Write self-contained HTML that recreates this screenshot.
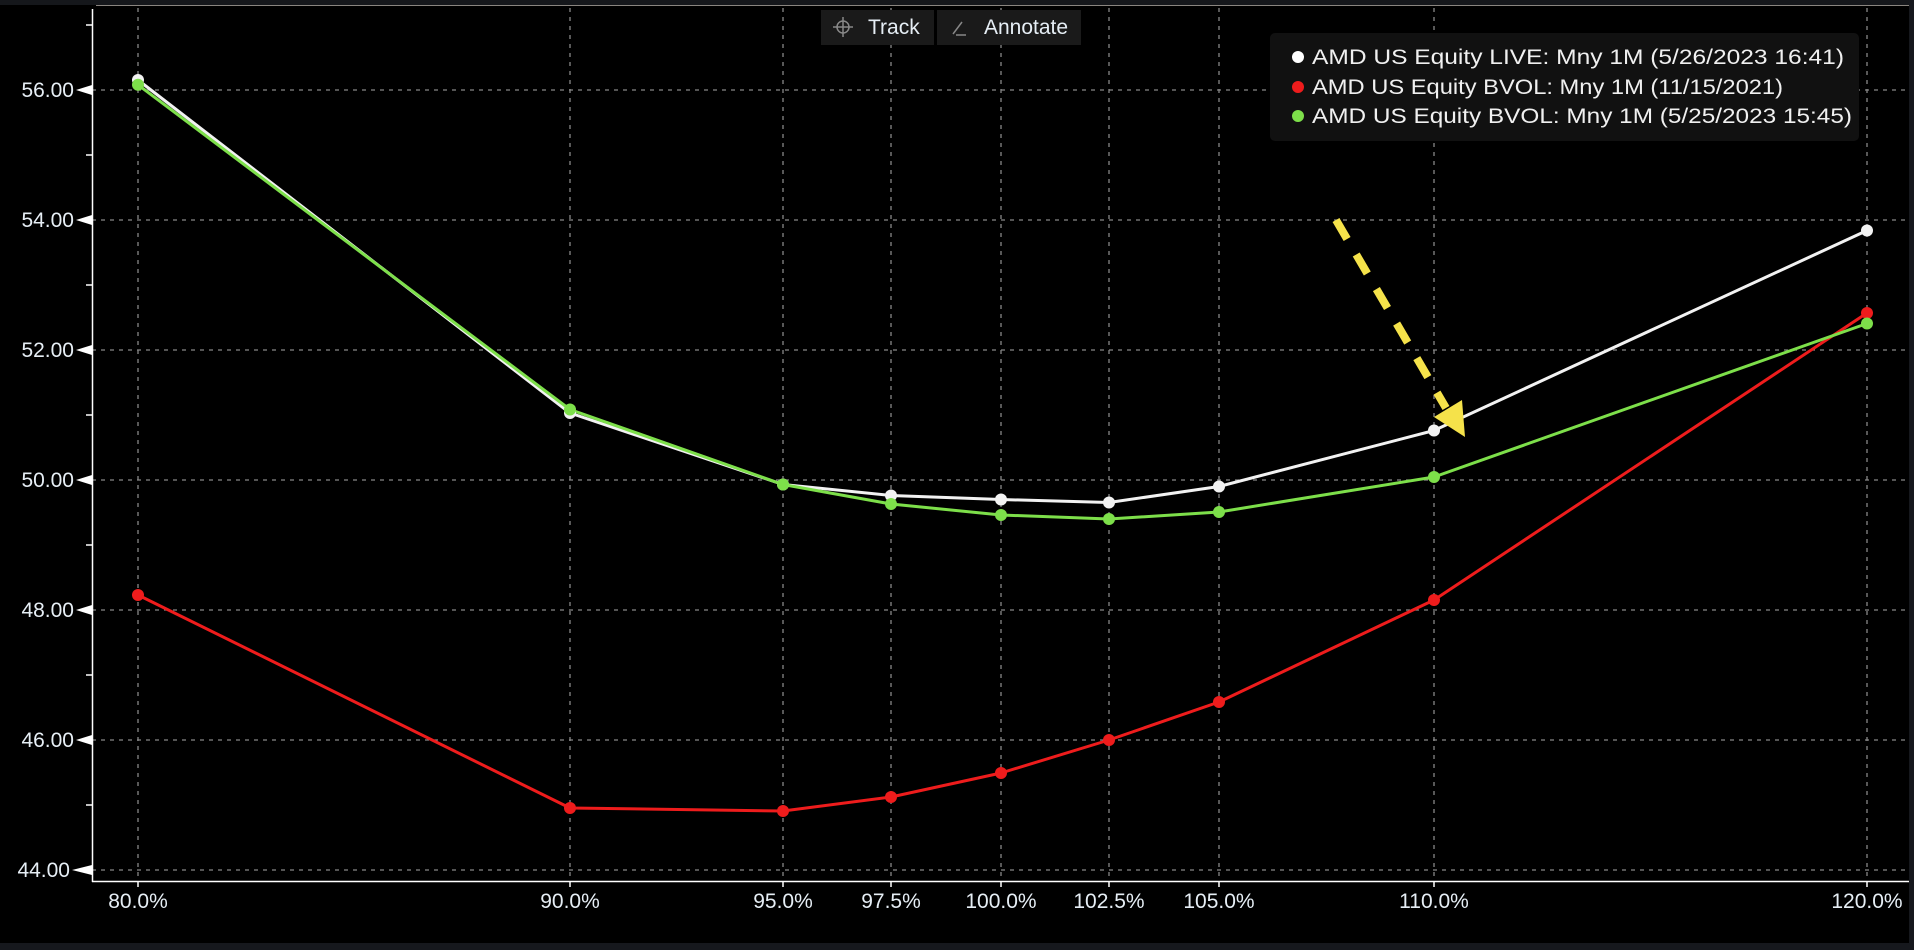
<!DOCTYPE html>
<html><head><meta charset="utf-8"><style>
html,body{margin:0;padding:0;background:#000;}
body{width:1914px;height:950px;overflow:hidden;position:relative;font-family:"Liberation Sans",sans-serif;}
</style></head><body>
<svg width="1914" height="950" viewBox="0 0 1914 950" xmlns="http://www.w3.org/2000/svg" style="position:absolute;left:0;top:0">
<rect width="1914" height="950" fill="#000"/>
<rect x="0" y="0" width="1914" height="5" fill="#15171b"/>
<line x1="96" y1="5.5" x2="1914" y2="5.5" stroke="#8a8580" stroke-width="1"/>
<rect x="0" y="943" width="1914" height="7" fill="#16181d"/>
<rect x="1909" y="0" width="5" height="950" fill="#16181d"/>
<!-- grid -->
<g stroke="#888" stroke-width="1.3" stroke-dasharray="4,5">
<line x1="92" y1="90" x2="1909" y2="90"/><line x1="92" y1="220" x2="1909" y2="220"/>
<line x1="92" y1="350" x2="1909" y2="350"/><line x1="92" y1="480" x2="1909" y2="480"/>
<line x1="92" y1="610" x2="1909" y2="610"/><line x1="92" y1="740" x2="1909" y2="740"/>
<line x1="92" y1="870" x2="1909" y2="870"/>
<line x1="138" y1="8" x2="138" y2="881"/><line x1="570" y1="8" x2="570" y2="881"/>
<line x1="783" y1="8" x2="783" y2="881"/><line x1="891" y1="8" x2="891" y2="881"/>
<line x1="1001" y1="8" x2="1001" y2="881"/><line x1="1109" y1="8" x2="1109" y2="881"/>
<line x1="1219" y1="8" x2="1219" y2="881"/><line x1="1434" y1="8" x2="1434" y2="881"/>
<line x1="1867" y1="8" x2="1867" y2="881"/>
</g>
<!-- axes -->
<g stroke="#fff" stroke-width="1.5">
<line x1="92.5" y1="9" x2="92.5" y2="882"/><line x1="92" y1="881.5" x2="1909" y2="881.5"/>
<line x1="86" y1="25" x2="92" y2="25"/><line x1="86" y1="155" x2="92" y2="155"/>
<line x1="86" y1="285" x2="92" y2="285"/><line x1="86" y1="415" x2="92" y2="415"/>
<line x1="86" y1="545" x2="92" y2="545"/><line x1="86" y1="675" x2="92" y2="675"/>
<line x1="86" y1="805" x2="92" y2="805"/>
<line x1="138" y1="881" x2="138" y2="887"/><line x1="570" y1="881" x2="570" y2="887"/>
<line x1="783" y1="881" x2="783" y2="887"/><line x1="891" y1="881" x2="891" y2="887"/>
<line x1="1001" y1="881" x2="1001" y2="887"/><line x1="1109" y1="881" x2="1109" y2="887"/>
<line x1="1219" y1="881" x2="1219" y2="887"/><line x1="1434" y1="881" x2="1434" y2="887"/>
<line x1="1867" y1="881" x2="1867" y2="887"/>
</g>
<g fill="#fff">
<polygon points="76,90 92,85 92,95"/><polygon points="76,220 92,215 92,225"/>
<polygon points="76,350 92,345 92,355"/><polygon points="76,480 92,475 92,485"/>
<polygon points="76,610 92,605 92,615"/><polygon points="76,740 92,735 92,745"/>
<polygon points="72,870 92,865 92,875"/>
</g>
<g fill="#e6eef5" font-size="21" font-family="Liberation Sans, sans-serif" text-anchor="end">
<text x="74" y="97">56.00</text><text x="74" y="227">54.00</text>
<text x="74" y="357">52.00</text><text x="74" y="487">50.00</text>
<text x="74" y="617">48.00</text><text x="74" y="747">46.00</text>
<text x="70" y="877">44.00</text>
</g>
<g fill="#e6eef5" font-size="21" font-family="Liberation Sans, sans-serif" text-anchor="middle">
<text x="138" y="908">80.0%</text><text x="570" y="908">90.0%</text>
<text x="783" y="908">95.0%</text><text x="891" y="908">97.5%</text>
<text x="1001" y="908">100.0%</text><text x="1109" y="908">102.5%</text>
<text x="1219" y="908">105.0%</text><text x="1434" y="908">110.0%</text>
<text x="1867" y="908">120.0%</text>
</g>
<!-- series -->
<g fill="none" stroke-width="3" stroke-linejoin="round">
<polyline stroke="#ee1c1c" points="138,595 570,808 783,811 891,797 1001,773 1109,740 1219,702 1434,600 1867,313"/>
<polyline stroke="#f2f2f2" points="138,80 570,413 783,484.5 891,495.5 1001,499.5 1109,502.5 1219,486.5 1434,430.5 1867,230.5"/>
<polyline stroke="#7ddf4a" points="138,84.8 570,409.5 783,484.5 891,504 1001,515 1109,519 1219,512 1434,477 1867,323.5"/>
</g>
<g fill="#ee1c1c">
<circle cx="138" cy="595" r="6"/><circle cx="570" cy="808" r="6"/><circle cx="783" cy="811" r="6"/><circle cx="891" cy="797" r="6"/><circle cx="1001" cy="773" r="6"/><circle cx="1109" cy="740" r="6"/><circle cx="1219" cy="702" r="6"/><circle cx="1434" cy="600" r="6"/><circle cx="1867" cy="313" r="6"/>
</g>
<g fill="#f2f2f2">
<circle cx="138" cy="80" r="6"/><circle cx="570" cy="413" r="6"/><circle cx="783" cy="484.5" r="6"/><circle cx="891" cy="495.5" r="6"/><circle cx="1001" cy="499.5" r="6"/><circle cx="1109" cy="502.5" r="6"/><circle cx="1219" cy="486.5" r="6"/><circle cx="1434" cy="430.5" r="6"/><circle cx="1867" cy="230.5" r="6"/>
</g>
<g fill="#7ddf4a">
<circle cx="138" cy="84.8" r="6"/><circle cx="570" cy="409.5" r="6"/><circle cx="783" cy="484.5" r="6"/><circle cx="891" cy="504" r="6"/><circle cx="1001" cy="515" r="6"/><circle cx="1109" cy="519" r="6"/><circle cx="1219" cy="512" r="6"/><circle cx="1434" cy="477" r="6"/><circle cx="1867" cy="323.5" r="6"/>
</g>
<!-- arrow -->
<line x1="1336" y1="220" x2="1446" y2="408" stroke="#f5e24a" stroke-width="8" stroke-dasharray="22,18"/>
<polygon points="1434,417 1462,400 1465,437" fill="#f5e24a"/>
<!-- legend -->
<rect x="1270" y="33" width="589" height="108" rx="5" fill="#111"/>
<circle cx="1298" cy="57" r="6" fill="#fff"/>
<circle cx="1298" cy="87" r="6" fill="#ee1c1c"/>
<circle cx="1298" cy="116" r="6" fill="#7ddf4a"/>
<g fill="#f0f0f0" font-size="21" font-family="Liberation Sans, sans-serif">
<text x="1312" y="64" textLength="532" lengthAdjust="spacingAndGlyphs">AMD US Equity LIVE: Mny 1M (5/26/2023 16:41)</text>
<text x="1312" y="94" textLength="471" lengthAdjust="spacingAndGlyphs">AMD US Equity BVOL: Mny 1M (11/15/2021)</text>
<text x="1312" y="123" textLength="540" lengthAdjust="spacingAndGlyphs">AMD US Equity BVOL: Mny 1M (5/25/2023 15:45)</text>
</g>
<!-- toolbar -->
<rect x="821" y="10" width="113" height="35" fill="#1a1a1a"/>
<rect x="937" y="10" width="144" height="35" fill="#1a1a1a"/>
<g stroke="#888" stroke-width="1.5" fill="none">
<circle cx="843" cy="27" r="6"/><line x1="833" y1="27" x2="853" y2="27"/><line x1="843" y1="17" x2="843" y2="37"/>
<line x1="953" y1="34" x2="962" y2="22"/><line x1="956" y1="35" x2="966" y2="35"/>
</g>
<g fill="#e6eef5" font-size="21" font-family="Liberation Sans, sans-serif">
<text x="868" y="34">Track</text><text x="984" y="34">Annotate</text>
</g>
</svg>
</body></html>
